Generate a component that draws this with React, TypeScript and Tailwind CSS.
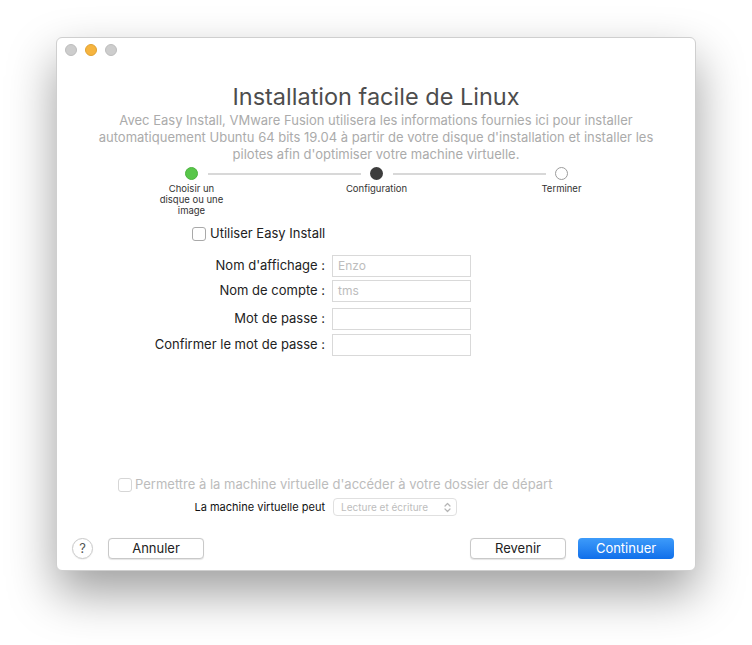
import React from 'react';

const font = { fontFamily: 'Inter, "Noto Sans", sans-serif' };

const Step: React.FC<{ dot: React.ReactNode; label: React.ReactNode }> = ({ dot, label }) => (
    <div className="flex flex-col items-center w-[13px]">
        {dot}
        <div className="mt-[3px] w-[90px] shrink-0 text-center text-[9.5px] leading-[11px] text-[#333]">{label}</div>
    </div>
);

const FormRow: React.FC<{ label: string; value?: string; className?: string }> = ({ label, value, className }) => (
    <div className={`flex items-center ${className ?? ''}`}>
        <span className="w-[268px] text-right text-[13px] text-[#222]">{label}</span>
        <div className="ml-[7px] w-[139px] h-[22px] border border-[#d9d9d9] bg-white flex items-center px-[5px] text-[12px] text-[#bdbdbd]">
            {value}
        </div>
    </div>
);

export default function App() {
    return (
        <div className="w-[752px] h-[645px] bg-white pt-[37px] pl-[56px]" style={font}>
            <div className="w-[640px] h-[534px] bg-white rounded-[6px] border border-[#cfcfcf] shadow-[0_22px_48px_rgba(0,0,0,0.38)] flex flex-col">
                {/* traffic lights */}
                <div className="flex gap-[8px] pl-[8px] pt-[6px]">
                    <span className="w-[12px] h-[12px] rounded-full bg-[#cdcdcd] border border-[#bdbdbd]" />
                    <span className="w-[12px] h-[12px] rounded-full bg-[#f6b43f] border border-[#e0a232]" />
                    <span className="w-[12px] h-[12px] rounded-full bg-[#cdcdcd] border border-[#bdbdbd]" />
                </div>

                <h1 className="mt-[26px] text-center text-[23.5px] leading-[30px] text-[#4d4d4d]">Installation facile de Linux</h1>
                <p className="text-center text-[13px] leading-[17px] text-[#ababab]">
                    Avec Easy Install, VMware Fusion utilisera les informations fournies ici pour installer<br />
                    automatiquement Ubuntu 64 bits 19.04 à partir de votre disque d'installation et installer les<br />
                    pilotes afin d'optimiser votre machine virtuelle.
                </p>

                {/* stepper */}
                <div className="mt-[4px] flex items-start pl-[128px]">
                    <Step
                        dot={<span className="w-[13px] h-[13px] rounded-full bg-[#58c64a] border border-[#4cb33f]" />}
                        label={<>Choisir un<br />disque ou une<br />image</>}
                    />
                    <div className="mx-[9.5px] mt-[5.5px] w-[153px] h-[2px] bg-[#d8d8d8]" />
                    <Step
                        dot={<span className="w-[13px] h-[13px] rounded-full bg-[#3d3d3d]" />}
                        label="Configuration"
                    />
                    <div className="mx-[9.5px] mt-[5.5px] w-[153px] h-[2px] bg-[#d8d8d8]" />
                    <Step
                        dot={<span className="w-[13px] h-[13px] rounded-full bg-white border border-[#9c9c9c]" />}
                        label="Terminer"
                    />
                </div>

                {/* easy install checkbox */}
                <label className="mt-[9px] ml-[135px] flex items-center h-[18px] gap-[4px]">
                    <span className="w-[14px] h-[14px] rounded-[3px] border border-[#a9a9a9] bg-white" />
                    <span className="text-[13px] text-[#222]">Utiliser Easy Install</span>
                </label>

                <div className="mt-[12px] flex flex-col">
                    <FormRow label="Nom d'affichage :" value="Enzo" />
                    <FormRow label="Nom de compte :" value="tms" className="mt-[3px]" />
                    <FormRow label="Mot de passe :" className="mt-[6px]" />
                    <FormRow label="Confirmer le mot de passe :" className="mt-[4px]" />
                </div>

                {/* shared folder */}
                <div className="mt-auto ml-[61px] flex items-center h-[18px] gap-[3px]">
                    <span className="w-[14px] h-[14px] rounded-[3px] border border-[#d6d6d6] bg-white" />
                    <span className="text-[13px] text-[#bcbcbc]">Permettre à la machine virtuelle d'accéder à votre dossier de départ</span>
                </div>
                <div className="mt-[4px] flex items-center h-[18px]">
                    <span className="w-[268px] text-right text-[11px] text-[#111]">La machine virtuelle peut</span>
                    <div className="ml-[8px] w-[124px] h-[18px] rounded-[4px] border border-[#e0e0e0] flex items-center justify-between pl-[7px] pr-[4px]">
                        <span className="text-[10px] text-[#bdbdbd]">Lecture et écriture</span>
                        <svg width="9" height="11" viewBox="0 0 9 11" fill="none" stroke="#b5b5b5" strokeWidth="1.2" strokeLinecap="round" strokeLinejoin="round">
                            <path d="M2 4l2.5-2.5L7 4" />
                            <path d="M2 7l2.5 2.5L7 7" />
                        </svg>
                    </div>
                </div>

                {/* buttons */}
                <div className="mt-[22px] mb-[11px] flex items-center pl-[15px] pr-[21px]">
                    <span className="w-[21px] h-[21px] rounded-full border border-[#c9c9c9] flex items-center justify-center text-[13px] text-[#555] shadow-[0_0.5px_1px_rgba(0,0,0,0.1)]">?</span>
                    <button className="ml-[15px] w-[96px] h-[21px] rounded-[4px] border border-[#c9c9c9] bg-white text-[13px] text-[#222] shadow-[0_0.5px_1px_rgba(0,0,0,0.1)]">Annuler</button>
                    <button className="ml-auto w-[96px] h-[21px] rounded-[4px] border border-[#c9c9c9] bg-white text-[13px] text-[#222] shadow-[0_0.5px_1px_rgba(0,0,0,0.1)]">Revenir</button>
                    <button className="ml-[12px] w-[96px] h-[21px] rounded-[4px] bg-gradient-to-b from-[#3d9bfa] to-[#0f6fea] text-[13px] text-white">Continuer</button>
                </div>
            </div>
        </div>
    );
}
